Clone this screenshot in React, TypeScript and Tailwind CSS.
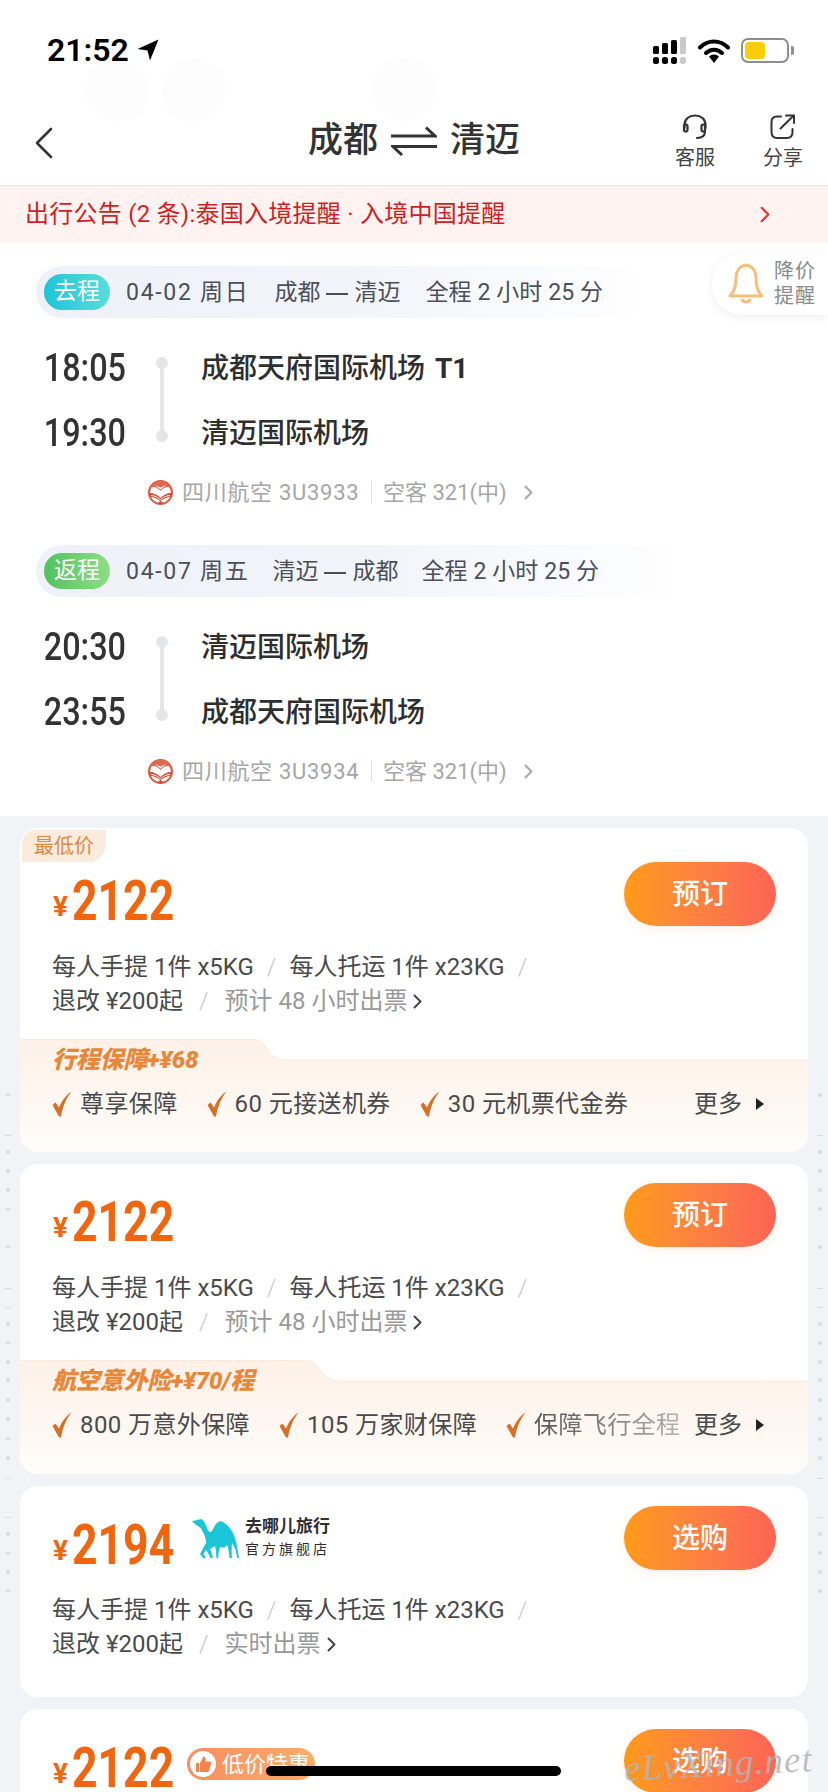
import React from "react";

const SANS = "font-['Roboto','Noto_Sans_CJK_SC',sans-serif]";

function Signal() {
  return (
    <svg width="34" height="27" viewBox="0 0 34 27">
      <rect x="0" y="9" width="6" height="8" rx="1.5" fill="#000" />
      <rect x="9" y="6" width="6" height="11" rx="1.5" fill="#000" />
      <rect x="18" y="3" width="6" height="14" rx="1.5" fill="#000" />
      <rect x="27" y="0" width="6" height="17" rx="1" fill="#c9c9c9" />
      <rect x="0" y="20" width="6" height="7" rx="2.5" fill="#000" />
      <rect x="9" y="20" width="6" height="7" rx="2.5" fill="#000" />
      <rect x="18" y="20" width="6" height="7" rx="2.5" fill="#000" />
      <rect x="27" y="20" width="6" height="7" rx="2.5" fill="#c9c9c9" />
    </svg>
  );
}

function Wifi() {
  return (
    <svg width="32" height="25" viewBox="0 0 32 25" fill="none">
      <path d="M2 9.5C10 1.5 22 1.5 30 9.5" stroke="#000" strokeWidth="4" strokeLinecap="round" />
      <path d="M8 15C12.500 10.500 19.500 10.500 24 15" stroke="#000" strokeWidth="4" strokeLinecap="round" />
      <path d="M11 18.500C14 15.700 18 15.700 21 18.500L16 25Z" fill="#000" />
    </svg>
  );
}

function Battery() {
  return (
    <div className="flex items-center gap-[2px]">
      <div className="w-[48px] h-[25px] rounded-[7px] border-2 border-[#8e8e8e] p-[2px] flex">
        <div className="w-[20px] h-full rounded-[4px] bg-[#ffcc0a]" />
      </div>
      <div className="w-[3px] h-[9px] rounded-r-[2px] bg-[#8e8e8e]" />
    </div>
  );
}

function LocationArrow() {
  return (
    <svg width="22" height="22" viewBox="0 0 22 22">
      <path d="M21.500 0.500L0.500 10L10.500 11.500L13 21.500Z" fill="#000" />
    </svg>
  );
}

function Headset() {
  return (
    <svg width="28" height="26" viewBox="0 0 28 26" fill="none" stroke="#333" strokeWidth="2.200" strokeLinecap="round">
      <path d="M3.500 14V11C3.500 5 8 1.500 14 1.500S24.500 5 24.500 11V14" />
      <rect x="3" y="10.500" width="3.500" height="7" rx="1.700" />
      <rect x="20.500" y="10.500" width="3.500" height="7" rx="1.700" />
      <path d="M24 17C24 22 21 24 16 24" />
    </svg>
  );
}

function Share() {
  return (
    <svg width="26" height="26" viewBox="0 0 26 26" fill="none" stroke="#333" strokeWidth="2" strokeLinecap="round" strokeLinejoin="round">
      <path d="M11 2.500H7C3.500 2.500 1.500 4.500 1.500 8V18C1.500 21.500 3.500 24 7 24H17C20.500 24 22.500 21.500 22.500 18V15" />
      <path d="M10.500 14.500L23.500 1.800" />
      <path d="M16 1.500H24V9" />
    </svg>
  );
}

function SwapArrows() {
  return (
    <svg width="46" height="32" viewBox="0 0 46 32" fill="none" stroke="#333" strokeWidth="3">
      <path d="M0 11H44L35 2.500" />
      <path d="M46 21.500H2L11 30" />
    </svg>
  );
}

function Bell() {
  return (
    <svg width="36" height="42" viewBox="0 0 36 42" fill="none" stroke="#f6be79" strokeWidth="3" strokeLinejoin="round">
      <path d="M18 2C11 3 8 9 8 15C8 24 6 29 2 33H34C30 29 28 24 28 15C28 9 25 3 18 2Z" />
      <path d="M14 36C14.500 40 21.500 40 22 36" />
    </svg>
  );
}

function AirlineLogo() {
  return (
    <svg width="25" height="25" viewBox="0 0 25 25" fill="none">
      <circle cx="12.500" cy="12.500" r="11.500" fill="#fff" stroke="#d95c43" strokeWidth="2" />
      <path d="M2 8C4 2 9 0.500 12.500 0.500S21 2 23 8C19 6 16 7 12.500 11C9 7 6 6 2 8Z" fill="#dd6a50" />
      <path d="M7 5L12.500 9.500L18 5L12.500 7.500Z" fill="#fff" />
      <path d="M1.500 13C6 13 10 15 12.500 18C15 15 19 13 23.500 13C23.500 15 23 16 22.500 17C19 17 15 19 13 21L15 23.500C13 24.500 12 24.500 10 23.500L12 21C10 19 6 17 2.500 17C2 16 1.500 15 1.500 13Z" fill="#d8482e" />
      <path d="M3 15.500C7 15.500 10 17.500 12.500 20C15 17.500 18 15.500 22 15.500" stroke="#fff" strokeWidth="1" />
    </svg>
  );
}

function Camel() {
  return (
    <svg width="48" height="39" viewBox="0 0 48 39" fill="#1bc6d8">
      <path d="M0 2L3 1.500L9 0C12 1 13 4 15 9C16.500 14 19 14 21 10C23.500 5 27 0.500 31 3C36 6 41 12 43 19C45 26 46 32 47 39H45C44.500 33 43 28 40 24C39.500 30 39.500 35 40 39H37.500C37 34 36.500 29 35 26C33 29 31 29 28 28C27 32 26 35 26.500 39H24.500C24 34 24 30 23 27C21 28 20 29 18 30C19.500 33 20 36 21 39H18.500C17 36 16 33 14 31L11.500 35L14 39H11L8 35L14 24C14.500 20 12 15 9.500 10C7 7 3 6 0 2Z" />
    </svg>
  );
}

function Thumb() {
  return (
    <svg width="26" height="26" viewBox="0 0 26 26">
      <circle cx="13" cy="13" r="13" fill="#fff" />
      <path d="M6 12H9V21H6ZM10 12L13.500 5.500C15.500 5.500 16 7.500 15.500 10.500H20C21 10.500 21.500 11.500 21 13L19 20C18.700 20.700 18 21 17 21H10Z" fill="#f5824f" />
    </svg>
  );
}

function Check() {
  return (
    <svg width="20" height="26" viewBox="0 0 20 26" fill="none" className="shrink-0">
      <path d="M0.500 14L3.500 11.500L7 16.500C9.500 10.500 13.500 4.500 19.500 0.500C14.500 7 11 14.500 9 25.500H7Z" fill="#d5702a" />
    </svg>
  );
}

function Chevron({ color = "#a8a8a8", w = 9, h = 15, sw = 2 }: { color?: string; w?: number; h?: number; sw?: number }) {
  return (
    <svg width={w} height={h} viewBox="0 0 9 15" fill="none" stroke={color} strokeWidth={sw} strokeLinecap="round" strokeLinejoin="round">
      <path d="M1.500 1.500L7.500 7.500L1.500 13.500" />
    </svg>
  );
}

function LegPill({
  label,
  badgeClass,
  date,
  from,
  to,
  fromGap,
  widthClass,
}: {
  label: string;
  badgeClass: string;
  date: string;
  from: string;
  to: string;
  fromGap: string;
  widthClass: string;
}) {
  return (
    <div className={`ml-[36px] h-[52px] rounded-l-full bg-gradient-to-r from-[#eef1f8] via-[#f2f4fa] to-transparent flex items-center pl-[8px] ${widthClass}`}>
      <div className={`w-[66px] h-[36px] rounded-full flex items-center justify-center text-white text-[23px] ${badgeClass}`}>{label}</div>
      <div className={`ml-[16px] pt-[3px] flex items-center text-[23px] text-[#4b4f58] ${fromGap}`}>
        <span className="whitespace-pre tracking-[1.700px]">{date}</span>
        <span className="flex items-center whitespace-pre">
          {from}
          <span className="mx-[6px] inline-block w-[22px] h-[2px] bg-[#4b4f58]" />
          {to}
        </span>
        <span className="whitespace-pre tracking-[0.100px]">全程 2 小时 25 分</span>
      </div>
    </div>
  );
}

function Flight({
  dep,
  arr,
  from,
  to,
  terminal,
  flightNo,
}: {
  dep: string;
  arr: string;
  from: string;
  to: string;
  terminal?: string;
  flightNo: string;
}) {
  const time = "h-[65px] flex items-center justify-end";
  const digits = "inline-block origin-right scale-x-[0.83] text-[39px] font-medium text-[#333]";
  return (
    <div>
      <div className="flex h-[130px]">
        <div className="w-[126px]">
          <div className={time}>
            <span className={digits}>{dep}</span>
          </div>
          <div className={time}>
            <span className={digits}>{arr}</span>
          </div>
        </div>
        <div className="ml-[30px] w-[12px] flex flex-col items-center pt-[21px] pb-[24px]">
          <div className="w-[12px] h-[12px] rounded-full bg-[#e3e5e8]" />
          <div className="w-[4px] flex-1 -my-[1px] bg-[#e3e5e8]" />
          <div className="w-[12px] h-[12px] rounded-full bg-[#e3e5e8]" />
        </div>
        <div className="ml-[33px] text-[28px] font-medium text-[#2e2e2e]">
          <div className="h-[65px] flex items-center whitespace-pre">
            {from}
            {terminal && <span className="ml-[10px] font-bold">{terminal}</span>}
          </div>
          <div className="h-[65px] flex items-center">{to}</div>
        </div>
      </div>
      <div className="h-[52px] pl-[148px] flex items-center text-[22px] text-[#a6a6a6]">
        <AirlineLogo />
        <span className="ml-[9px] w-[189px] whitespace-pre tracking-[0.700px]">四川航空 {flightNo}</span>
        <span className="w-[1px] h-[22px] bg-[#e0e0e0]" />
        <span className="ml-[11px] w-[131px] whitespace-pre">空客 321(中)</span>
        <span className="ml-[10px]">
          <Chevron />
        </span>
      </div>
    </div>
  );
}

function Price({ value }: { value: string }) {
  return (
    <div className="flex items-center text-[#f0660f] font-bold">
      <span className="text-[28px] mt-[12px] w-[19px] leading-none">¥</span>
      <span className="inline-block w-[104px] origin-left scale-x-[0.81] text-[55px] leading-[60px] font-['Roboto',sans-serif]">{value}</span>
    </div>
  );
}

function BuyButton({ label }: { label: string }) {
  return (
    <div className="w-[152px] h-[64px] rounded-full bg-gradient-to-r from-[#ff9a14] to-[#fc6455] flex items-center justify-center pt-[2px] text-white text-[28px] font-medium shadow-[0_4px_10px_rgba(255,150,80,0.12)]">
      {label}
    </div>
  );
}

function Slash() {
  return <span className="mx-[13px] text-[#c8c8c8] font-light">/</span>;
}

function Rules({ ticket }: { ticket: string }) {
  return (
    <div className="pl-[32px] text-[24px] text-[#4a4a4a]">
      <div className="h-[34px] flex items-center whitespace-pre">
        每人手提 1件 x5KG
        <Slash />
        每人托运 1件 x23KG
        <Slash />
      </div>
      <div className="h-[34px] flex items-center whitespace-pre">
        退改 ¥200起
        <span className="mx-[3px]">
          <Slash />
        </span>
        <span className="text-[#999]">{ticket}</span>
        <span className="ml-[6px]">
          <Chevron color="#444" w={9} h={15} sw={2} />
        </span>
      </div>
    </div>
  );
}

function Perk({ text, fade }: { text: string; fade?: boolean }) {
  return (
    <div className="flex items-center gap-[8px]">
      <Check />
      <span className={`tracking-[0.400px] ${fade ? "bg-gradient-to-r from-[#555] to-[#b0b0b0] bg-clip-text text-transparent" : ""}`}>{text}</span>
    </div>
  );
}

function Insurance({
  title,
  tab,
  perks,
  gap,
}: {
  title: string;
  tab: number;
  perks: { text: string; fade?: boolean }[];
  gap: string;
}) {
  const d = `M0 0.5H${tab}C${tab + 16} 0.5 ${tab + 12} 21 ${tab + 34} 21H788V114H0Z`;
  return (
    <div className="relative mt-[21px] h-[114px]">
      <svg width="788" height="114" viewBox="0 0 788 114" className="absolute inset-0">
        <defs>
          <linearGradient id={`ins-${tab}`} x1="0" y1="0" x2="0" y2="1">
            <stop offset="0" stopColor="#fdf1e7" />
            <stop offset="1" stopColor="#fffcf9" />
          </linearGradient>
        </defs>
        <path d={d} fill={`url(#ins-${tab})`} />
        <path d={`M0 0.5H${tab}C${tab + 16} 0.5 ${tab + 12} 21 ${tab + 34} 21H788`} fill="none" stroke="#fbe9d9" strokeWidth="1" />
      </svg>
      <div className="relative pl-[32px] pr-[43px]">
        <div className="h-[42px] flex items-center text-[24px] font-black italic tracking-[-0.200px] text-[#e8873a]">{title}</div>
        <div className="mt-[3px] h-[40px] flex items-center text-[24px] text-[#4a4a4a]">
          <div className={`flex items-center ${gap}`}>
            {perks.map((p) => (
              <Perk key={p.text} text={p.text} fade={p.fade} />
            ))}
          </div>
          <div className="ml-auto flex items-center gap-[13px]">
            <span>更多</span>
            <svg width="10" height="14" viewBox="0 0 10 14">
              <path d="M1 1L9 7L1 13Z" fill="#222" />
            </svg>
          </div>
        </div>
      </div>
    </div>
  );
}

function TopRow({ pt, price, extra, button }: { pt: string; price: string; extra?: React.ReactNode; button: string }) {
  return (
    <div className={`flex justify-between pl-[33px] pr-[32px] ${pt}`}>
      <div className="h-[64px] pt-[14px] flex items-center">
        <Price value={price} />
        {extra}
      </div>
      <BuyButton label={button} />
    </div>
  );
}

const SIDE_MARKS: [number, boolean][] = [
  [1093, false], [1135, true], [1150, false], [1169, false], [1188, false], [1207, false], [1245, false],
  [1288, true], [1307, true], [1322, false], [1341, false], [1360, false], [1378, false], [1398, false],
  [1417, false], [1437, false], [1456, false], [1478, true], [1517, true], [1532, false], [1551, false],
  [1570, false], [1589, false],
];

function SideMarks({ side }: { side: string }) {
  return (
    <div className={`absolute top-0 w-[6px] h-full ${side}`}>
      {SIDE_MARKS.map(([y, dash]) => (
        <div
          key={y}
          className={dash ? "absolute left-0 w-[6px] h-[1px] bg-[#d8dbe2]" : "absolute left-[1px] w-[4px] h-[4px] rounded-full bg-[#d8dbe2]"}
          style={{ top: y }}
        />
      ))}
    </div>
  );
}

export default function App() {
  return (
    <div className={`relative w-[828px] h-[1792px] overflow-hidden bg-white ${SANS}`}>
      {/* ghost circles */}
      <div className="absolute left-[85px] top-[58px] w-[64px] h-[64px] rounded-full bg-[#fdfdfd]" />
      <div className="absolute left-[162px] top-[58px] w-[64px] h-[64px] rounded-full bg-[#fdfdfd]" />
      <div className="absolute left-[372px] top-[58px] w-[64px] h-[64px] rounded-full bg-[#fdfdfd]" />

      {/* status bar */}
      <div className="relative h-[100px] pl-[47px] pr-[34px] flex justify-between items-start pt-[29px]">
        <div className="flex items-center gap-[8px] h-[42px]">
          <span className="text-[32px] font-semibold text-black leading-none">21:52</span>
          <LocationArrow />
        </div>
        <div className="flex items-center gap-[11px] h-[42px]">
          <Signal />
          <Wifi />
          <Battery />
        </div>
      </div>

      {/* nav */}
      <div className="relative h-[86px] border-b border-[#ebe4e0] grid grid-cols-[1fr_auto_1fr] items-start">
        <div className="pl-[35px] pt-[27px]">
          <svg width="18" height="32" viewBox="0 0 18 32" fill="none" stroke="#333" strokeWidth="2.600" strokeLinecap="round" strokeLinejoin="round">
            <path d="M16 2L2 16L16 30" />
          </svg>
        </div>
        <div className="pt-[2px] h-[80px] flex items-center gap-[13px] text-[35px] font-medium text-[#333]">
          <span>成都</span>
          <SwapArrows />
          <span>清迈</span>
        </div>
        <div className="flex justify-end pr-[25px] gap-[48px] pt-[14px] text-[20px] text-[#444]">
          <div className="flex flex-col items-center">
            <Headset />
            <span className="mt-[4px] leading-[28px]">客服</span>
          </div>
          <div className="flex flex-col items-center">
            <Share />
            <span className="mt-[4px] leading-[28px]">分享</span>
          </div>
        </div>
      </div>

      {/* notice */}
      <div className="h-[56px] pl-[25px] pr-[58px] bg-[#fff3f1] flex items-center justify-between text-[#cf1f24] text-[24px]">
        <span className="whitespace-pre tracking-[0.250px]">出行公告 (2 条):泰国入境提醒 · 入境中国提醒</span>
        <Chevron color="#e2333a" w={10} h={17} sw={2} />
      </div>

      {/* flight details */}
      <div className="relative h-[574px] pt-[24px]">
        <LegPill
          label="去程"
          badgeClass="bg-gradient-to-r from-[#19c4d8] to-[#58dcd9]"
          date="04-02 周日"
          from="成都"
          to="清迈"
          fromGap="gap-[25px]"
          widthClass="w-[620px]"
        />
        <div className="mt-[18px]">
          <Flight dep="18:05" arr="19:30" from="成都天府国际机场" terminal="T1" to="清迈国际机场" flightNo="3U3933" />
        </div>
        <div className="mt-[27px]">
          <LegPill
            label="返程"
            badgeClass="bg-gradient-to-r from-[#4fc35f] to-[#8fdc87]"
            date="04-07 周五"
            from="清迈"
            to="成都"
            fromGap="gap-[23px]"
            widthClass="w-[660px]"
          />
        </div>
        <div className="mt-[18px]">
          <Flight dep="20:30" arr="23:55" from="清迈国际机场" to="成都天府国际机场" flightNo="3U3934" />
        </div>

        <div className="absolute right-0 top-[11px] w-[116px] h-[62px] rounded-l-[30px] bg-white shadow-[0_2px_8px_rgba(60,70,100,0.09)] flex items-center pl-[16px] gap-[10px]">
          <Bell />
          <div className="text-[20px] leading-[25px] text-[#8a8a8a] tracking-[1px]">
            <div>降价</div>
            <div>提醒</div>
          </div>
        </div>
      </div>

      {/* offers */}
      <div className="h-[976px] bg-[#f1f3f7] pt-[12px] px-[20px] flex flex-col gap-[12px]">
        <div className="relative shrink-0 h-[324px] rounded-[18px] bg-white overflow-hidden">
          <div className="absolute left-[2px] top-[2px] w-[84px] h-[32px] rounded-tl-[14px] rounded-br-[18px] bg-[#fbebdc] flex items-center pl-[12px] text-[20px] text-[#d98b44]">
            最低价
          </div>
          <TopRow pt="pt-[34px]" price="2122" button="预订" />
          <div className="mt-[24px]">
            <Rules ticket="预计 48 小时出票" />
          </div>
          <Insurance
            title="行程保障+¥68"
            tab={233}
            gap="gap-[29px]"
            perks={[{ text: "尊享保障" }, { text: "60 元接送机券" }, { text: "30 元机票代金券" }]}
          />
        </div>

        <div className="relative shrink-0 h-[310px] rounded-[18px] bg-white overflow-hidden">
          <TopRow pt="pt-[19px]" price="2122" button="预订" />
          <div className="mt-[24px]">
            <Rules ticket="预计 48 小时出票" />
          </div>
          <Insurance
            title="航空意外险+¥70/程"
            tab={286}
            gap="gap-[29px]"
            perks={[{ text: "800 万意外保障" }, { text: "105 万家财保障" }, { text: "保障飞行全程", fade: true }]}
          />
        </div>

        <div className="relative shrink-0 h-[211px] rounded-[18px] bg-white overflow-hidden">
          <TopRow
            pt="pt-[20px]"
            price="2194"
            button="选购"
            extra={
              <div className="ml-[16px] -mt-[14px] flex items-center gap-[5px]">
                <Camel />
                <div className="text-[#2f2f2f]">
                  <div className="text-[17px] leading-[23px] font-bold whitespace-nowrap">去哪儿旅行</div>
                  <div className="text-[14px] leading-[23px] tracking-[3px] whitespace-nowrap">官方旗舰店</div>
                </div>
              </div>
            }
          />
          <div className="mt-[23px]">
            <Rules ticket="实时出票" />
          </div>
        </div>

        <div className="relative shrink-0 h-[120px] rounded-t-[18px] bg-white overflow-hidden">
          <TopRow
            pt="pt-[20px]"
            price="2122"
            button="选购"
            extra={
              <div className="ml-[11px] -mt-[8px] w-[128px] h-[32px] rounded-full bg-gradient-to-r from-[#f88e5e] to-[#fdab6d] flex items-center pl-[3px] gap-[6px] text-white text-[22px]">
                <Thumb />
                <span className="whitespace-nowrap">低价特惠</span>
              </div>
            }
          />
        </div>
      </div>

      {/* overlays */}
      <SideMarks side="left-[5px]" />
      <SideMarks side="right-[5px]" />
      <div className="absolute left-[266px] top-[1766px] w-[295px] h-[10px] rounded-full bg-black" />
      <div className="absolute left-[624px] top-[1741px] -rotate-3 font-['Liberation_Serif',serif] italic text-[37px] leading-[46px] tracking-[1px] text-[#b4b4b4]/85 whitespace-nowrap">
        eLvXing.net
      </div>
    </div>
  );
}
